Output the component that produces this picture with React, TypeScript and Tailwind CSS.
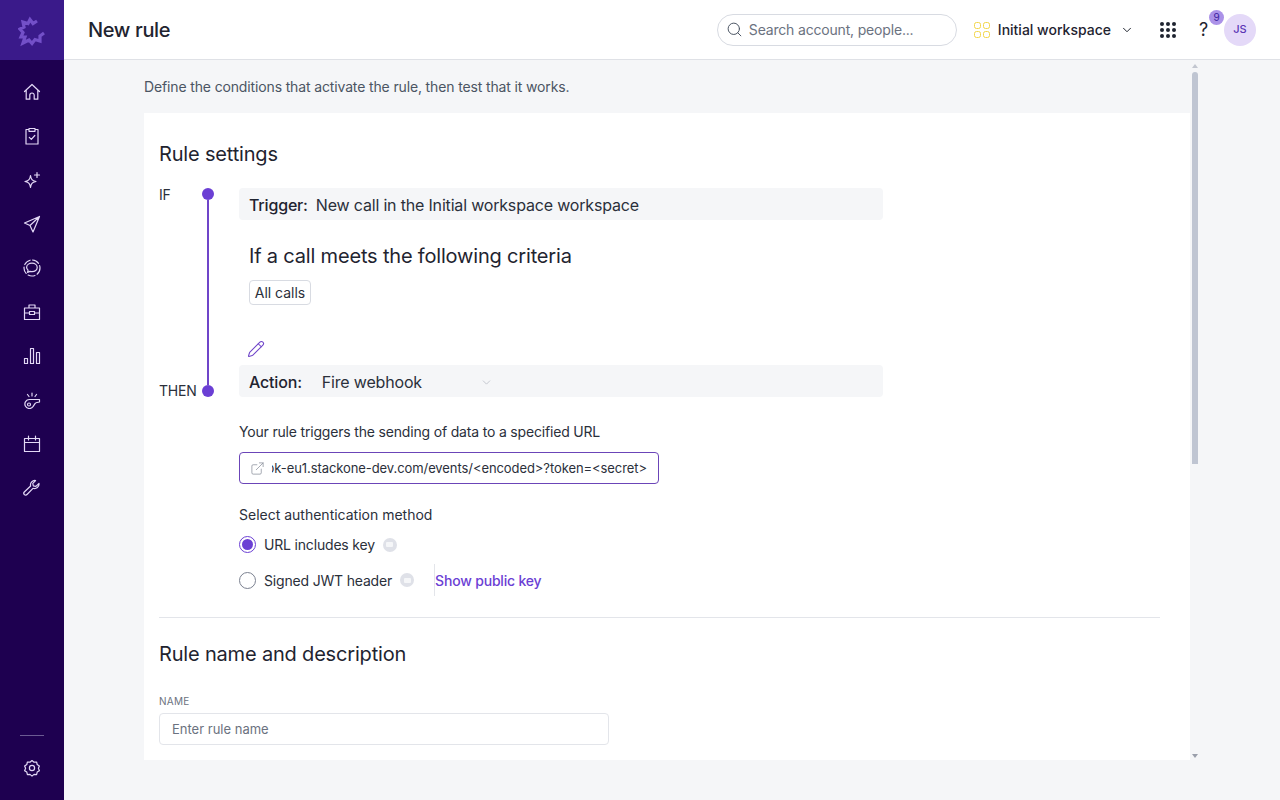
import { ChevronDown, ExternalLink, Pencil, Search } from 'lucide-react'

const font = { fontFamily: 'Inter, sans-serif' }

function NavIcon({ children }: { children: React.ReactNode }) {
  return (
    <div className="flex h-[44px] w-full items-center justify-center text-[#e3d8f6]">
      <svg width="18" height="18" viewBox="0 0 18 18" fill="none" stroke="currentColor" strokeWidth="1.2" strokeLinejoin="round" strokeLinecap="round">
        {children}
      </svg>
    </div>
  )
}

function Sidebar() {
  return (
    <aside className="flex h-full w-16 shrink-0 flex-col bg-[#1e0050]">
      <div className="flex h-[60px] items-center justify-center bg-[#3a1a8a] pt-[4px]">
        <svg width="28" height="32" viewBox="0 0 28 32" fill="none" stroke="#7350c8" strokeWidth="3.2" strokeLinejoin="miter">
          <path d="M19 5L15 7.500 12 3.500 10 7.500 5 6 6 11 2 13 5 16.500 3 21 7 21 5 27 11 24 14 27.500 17 23.500 22 25 22 20 26 17" />
        </svg>
      </div>
      <div className="flex flex-col pt-[10px]">
        <NavIcon><path d="M1.5 8.5L9 1.500l7.500 7M3.200 7.200V16.200h3.600v-4a2.200 2.200 0 0 1 4.400 0v4h3.600V7.200" /></NavIcon>
        <NavIcon><path d="M6 2.500H3v14.500h12V2.500h-3M6 1.500h6v2.800H6zM6.300 10.300l2 2 3.500-3.800" /></NavIcon>
        <NavIcon><path d="M7.500 4.500c.6 4 1.500 5.200 5.500 6-4 .8-4.900 2-5.500 6-.6-4-1.500-5.200-5.500-6 4-.8 4.900-2 5.500-6zM14 1.500v5M11.500 4h5" /></NavIcon>
        <NavIcon><path d="M16.500 1.500L1.500 8l5.500 2.500 3 6.500zM7 10.500l9.500-9" /></NavIcon>
        <NavIcon>
          <circle cx="9" cy="9" r="8" strokeDasharray="7 2.500" />
          <path d="M9 4.200c3 0 5.200 1.900 5.200 4.300S12 12.700 9 12.700c-.7 0-1.400-.1-2-.3l-2.500 1 .6-2.300c-1-.8-1.500-1.600-1.500-2.600 0-2.400 2.400-4.300 5.400-4.300z" />
        </NavIcon>
        <NavIcon><path d="M1.500 5h15v11.500h-15zM6 5V2h6v3M1.500 10h5M11.500 10h5M6.500 8.500h5v3h-5z" /></NavIcon>
        <NavIcon><path d="M1.500 11.500h3v5h-3zM7.500 1.500h3v15h-3zM13.500 5.500h3v11h-3z" /></NavIcon>
        <NavIcon><path d="M16.500 8.500H6.500a4.500 4.500 0 1 0 3.500 7.200l2-3c.5-.7 1-1 2-1.200l2.500-.5zM6 13.500m-1.500 0a1.500 1.500 0 1 0 3 0a1.500 1.500 0 1 0-3 0M9 2v3M4.500 3.500l1.500 2M13.500 3.500l-1.500 2" /></NavIcon>
        <NavIcon><path d="M1.500 3.500h15v13h-15zM1.500 7.500h15M5.500 1v4M12.500 1v4" /></NavIcon>
        <NavIcon><path d="M16 4.500a4.500 4.500 0 0 1-6 4.800l-6 6.200a1.800 1.800 0 0 1-2.700-2.500l6.300-6a4.500 4.500 0 0 1 5-5.500l-2.800 2.800.5 2.600 2.600.5z" /></NavIcon>
      </div>
      <div className="mt-auto flex flex-col items-center pb-[10px]">
        <div className="mb-[10px] h-px w-6 bg-[#6b5a93]" />
        <NavIcon>
          <path d="M9 1.500l2 1.700 2.600-.2.600 2.500 2.200 1.400-1 2.400 1 2.400-2.200 1.400-.6 2.500-2.600-.2-2 1.700-2-1.700-2.600.2-.6-2.500-2.200-1.400 1-2.400-1-2.400 2.200-1.400.6-2.500 2.600.2z" />
          <circle cx="9" cy="9" r="2.600" />
        </NavIcon>
      </div>
    </aside>
  )
}

function Header() {
  return (
    <header className="flex h-[60px] shrink-0 items-center border-b border-[#dfe1e6] bg-white pl-6 pr-6">
      <h1 className="text-[20px] font-medium tracking-[-0.35px] text-[#1f2430]">New rule</h1>
      <div className="ml-auto flex h-8 w-[240px] items-center gap-[6px] rounded-full border border-[#d8dbe2] pl-2 text-[#6b7280]">
        <Search size={17} strokeWidth={1.4} className="text-[#4b5563]" />
        <span className="text-[14px] text-[#6b7280]">Search account, people...</span>
      </div>
      <div className="ml-[17px] grid grid-cols-2 gap-[2px]">
        <span className="h-[7px] w-[7px] rounded-[2.5px] border border-[#f2d64b]" />
        <span className="h-[7px] w-[7px] rounded-[2.5px] border border-[#f2d64b]" />
        <span className="h-[7px] w-[7px] rounded-[2.5px] border border-[#f2d64b]" />
        <span className="h-[7px] w-[7px] rounded-[2.5px] border border-[#f2d64b]" />
      </div>
      <span className="ml-2 text-[14px] font-medium tracking-normal text-[#1f2430]">Initial workspace</span>
      <ChevronDown size={14} strokeWidth={1.7} className="ml-[9px] text-[#1f2430]" />
      <div className="ml-[26px] grid grid-cols-3 gap-[2px]">
        {Array.from({ length: 9 }).map((_, i) => (
          <span key={i} className="h-1 w-1 rounded-full bg-[#1f2430]" />
        ))}
      </div>
      <div className="relative ml-[23px] w-[10px] text-[18px] text-[#1f2430]">
        ?
        <span className="absolute -right-[15px] -top-[6px] flex h-[15px] w-[15px] items-center justify-center rounded-full bg-[#ab92e8] text-[10px] tracking-normal text-[#3b1fa0]">9</span>
      </div>
      <div className="ml-[15px] flex h-8 w-8 items-center justify-center rounded-full bg-[#e4d9f8] text-[11px] font-medium tracking-normal text-[#5b35b5]">JS</div>
    </header>
  )
}

function InfoDot() {
  return (
    <span className="flex h-[14px] w-[14px] items-center justify-center rounded-full bg-[#dfe1e8]">
      <span className="h-[5px] w-[7px] rounded-[1px] bg-[#f5f6f8]" />
    </span>
  )
}

function Radio({ checked, label }: { checked?: boolean; label: string }) {
  return (
    <div className="flex items-center">
      <span className={`flex h-[17px] w-[17px] items-center justify-center rounded-full border bg-white ${checked ? 'border-[#6b3fd4]' : 'border-[#7b8190]'}`}>
        {checked && <span className="h-[11px] w-[11px] rounded-full bg-[#6b3fd4]" />}
      </span>
      <span className="ml-2 text-[14px] text-[#2b303b]">{label}</span>
      <span className="ml-[8px]"><InfoDot /></span>
    </div>
  )
}

function Timeline() {
  return (
    <div className="flex h-[209px] w-20 shrink-0 flex-col text-[14px] text-[#2b303b]">
      <div className="flex h-3 items-center">
        <span className="w-[43px]">IF</span>
        <span className="h-3 w-3 rounded-full bg-[#6b3fd4]" />
      </div>
      <div className="ml-[48px] w-[2px] flex-1 bg-[#6f45c9]" />
      <div className="flex h-3 items-center">
        <span className="w-[43px] pb-[2px]">THEN</span>
        <span className="h-3 w-3 rounded-full bg-[#6b3fd4]" />
      </div>
    </div>
  )
}

function RuleBody() {
  return (
    <div className="flex-1 text-[#2b303b]">
      <div className="flex h-8 w-[644px] items-center rounded bg-[#f5f6f8] px-[10px] pt-[2px] text-[16px]">
        <span className="font-medium text-[#1f2430]">Trigger:</span>
        <span className="ml-[8px]">New call in the Initial workspace workspace</span>
      </div>
      <h3 className="ml-[10px] mt-[22px] text-[20px] leading-7 text-[#1f2430]">If a call meets the following criteria</h3>
      <div className="ml-[10px] mt-[10px] flex h-[25px] w-[62px] items-center justify-center rounded border border-[#d8dbe2] text-[14px] tracking-normal">All calls</div>
      <Pencil size={18} strokeWidth={1.4} className="ml-2 mt-[35px] text-[#6f45c9]" />
      <div className="mt-[7px] flex h-8 w-[644px] items-center rounded bg-[#f5f6f8] px-[10px] pt-[2px] text-[16px]">
        <span className="font-medium text-[#1f2430]">Action:</span>
        <span className="ml-5">Fire webhook</span>
        <ChevronDown size={13} strokeWidth={1.4} className="ml-[58px] text-[#b6bac3]" />
      </div>
      <p className="mt-[25px] text-[14px] leading-5">Your rule triggers the sending of data to a specified URL</p>
      <div className="mt-[10px] flex h-8 w-[420px] items-center rounded border border-[#6b45b8] pl-[10px]">
        <ExternalLink size={15} strokeWidth={1.2} className="shrink-0 text-[#8a8f9b]" />
        <span className="ml-[7px] w-[375px] overflow-hidden whitespace-nowrap pt-[2px] text-right text-[13px] tracking-[-0.08px] text-[#2b303b]" dir="rtl">
          <bdi>https://webhook-eu1.stackone-dev.com/events/&lt;encoded&gt;?token=&lt;secret&gt;</bdi>
        </span>
      </div>
      <p className="mt-[21px] text-[14px] leading-5 tracking-normal">Select authentication method</p>
      <div className="mt-[9px]"><Radio checked label="URL includes key" /></div>
      <div className="mt-[9px] flex h-8 items-center">
        <Radio label="Signed JWT header" />
        <div className="ml-[20px] h-8 w-px bg-[#e3e5ea]" />
        <span className="text-[14px] font-medium text-[#6b3fd4]">Show public key</span>
      </div>
    </div>
  )
}

function Scrollbar() {
  return (
    <div className="flex h-full w-[10px] shrink-0 flex-col items-center pt-[4px]">
      <span className="h-0 w-0 border-x-[3px] border-b-[4px] border-x-transparent border-b-[#c2c6d0]" />
      <div className="mt-1 h-[392px] w-[6px] rounded-t-[3px] bg-[#bfc5d2]" />
      <span className="mt-auto mb-[2px] h-0 w-0 border-x-[3px] border-t-[4px] border-x-transparent border-t-[#9a9fab]" />
    </div>
  )
}

export default function App() {
  return (
    <div className="flex h-screen w-screen overflow-hidden bg-[#f5f6f8] tracking-[-0.18px]" style={font}>
      <Sidebar />
      <div className="flex min-w-0 flex-1 flex-col">
        <Header />
        <div className="flex h-[700px] pl-20">
          <div className="flex h-full w-[1046px] shrink-0 flex-col overflow-hidden">
            <p className="flex h-[53px] shrink-0 items-center text-[14px] tracking-[-0.14px] text-[#4b5563]">Define the conditions that activate the rule, then test that it works.</p>
            <section className="flex-1 bg-white px-[15px]">
              <h2 className="pt-[27px] text-[20px] leading-7 text-[#1f2430]">Rule settings</h2>
              <div className="mt-[20px] flex">
                <Timeline />
                <RuleBody />
              </div>
              <div className="mt-[21px] mr-[15px] h-px bg-[#e3e5ea]" />
              <h2 className="mt-[22px] text-[20px] leading-7 text-[#1f2430]">Rule name and description</h2>
              <label className="mt-[25px] block text-[10px] uppercase leading-4 tracking-wide text-[#6b7280]">Name</label>
              <div className="mt-[4px] flex h-8 w-[450px] items-center rounded border border-[#e3e5ea] px-3 pt-[2px] text-[13px] tracking-normal text-[#6b7280]">Enter rule name</div>
            </section>
          </div>
          <Scrollbar />
        </div>
      </div>
    </div>
  )
}
